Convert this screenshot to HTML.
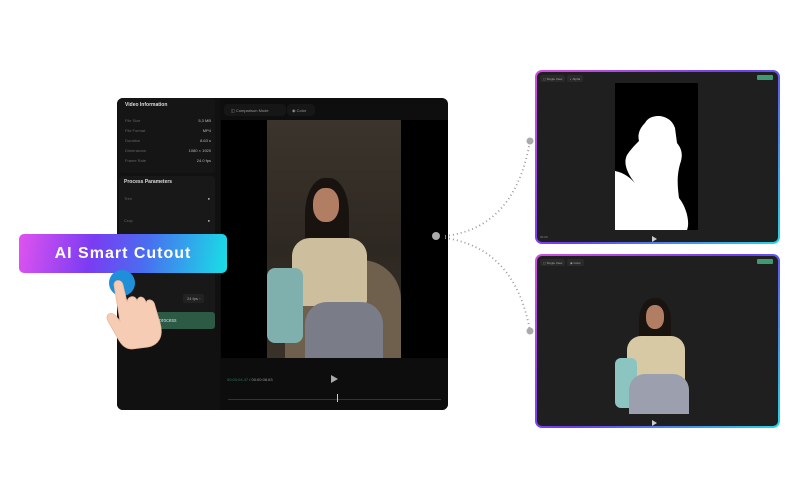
<!DOCTYPE html>
<html><head><meta charset="utf-8"><style>
*{margin:0;padding:0;box-sizing:border-box}
body{width:800px;height:500px;background:#fff;position:relative;overflow:hidden;font-family:"Liberation Sans",sans-serif}
.a{position:absolute}
.win{left:117px;top:98px;width:331px;height:312px;background:#0e0e0e;border-radius:6px;overflow:hidden}
.side{left:0;top:0;width:103px;height:312px;background:#111}
.card{background:#181818;border-radius:4px;left:2px;width:96px}
.t{font-size:5px;font-weight:bold;color:#ddd}
.r{font-size:4px;color:#666;display:flex;justify-content:space-between;width:86px}
.r b{color:#bbb;font-weight:normal}
.sm{font-size:4px;color:#aaa;white-space:nowrap}
.rw{left:535px;width:245px;height:174px;border-radius:7px;padding:2px;background:linear-gradient(135deg,#d54ee0,#6b3ff0 50%,#27d6e6)}
.rin{width:100%;height:100%;background:#1f1f1f;border-radius:5px;position:relative;overflow:hidden}
.tag{height:7px;background:#2a2a2a;border-radius:2px;font-size:3px;color:#aaa;padding:2px 3px;white-space:nowrap;top:3px}
</style></head><body>
<div class="a win">
 <div class="a side">
  <div class="a card" style="top:0;height:75px;background:#151515">
   <div class="a t" style="left:6px;top:4px">Video Information</div>
   <div class="a r" style="left:6px;top:20px"><span>File Size</span><b>5,3 MB</b></div>
   <div class="a r" style="left:6px;top:30px"><span>File Format</span><b>MP4</b></div>
   <div class="a r" style="left:6px;top:40px"><span>Duration</span><b>8.63 s</b></div>
   <div class="a r" style="left:6px;top:50px"><span>Dimensions</span><b>1080 × 1920</b></div>
   <div class="a r" style="left:6px;top:60px"><span>Frame Rate</span><b>24.0 fps</b></div>
  </div>
  <div class="a card" style="top:78px;height:150px">
   <div class="a t" style="left:5px;top:3px">Process Parameters</div>
   <div class="a r" style="left:5px;top:20px"><span>Trim</span><b>●</b></div>
   <div class="a r" style="left:5px;top:42px"><span>Crop</span><b>●</b></div>
   <div class="a sm" style="left:64px;top:118px;background:#222;padding:2px 4px;border-radius:2px">24 fps ◦</div>
  </div>
  <div class="a" style="left:2px;top:214px;width:96px;height:17px;background:#2c5a45;border-radius:3px;font-size:5px;color:#cde;padding:6px 0 0 40px">process</div>
 </div>
 <div class="a sm" style="left:107px;top:6px;width:62px;height:12px;background:#161616;border-radius:4px;color:#999;padding:4px 0 0 7px">◫ Comparison Mode</div>
 <div class="a sm" style="left:170px;top:6px;width:28px;height:12px;background:#161616;border-radius:4px;color:#999;padding:4px 0 0 5px">◉ Color</div>
 <div class="a" style="left:104px;top:22px;width:227px;height:238px;background:#000"></div>
 <div class="a" style="left:150px;top:22px;width:134px;height:238px;background:linear-gradient(#3b342c,#2e2822 55%,#3a3229);overflow:hidden">
  <div class="a" style="left:18px;top:140px;width:116px;height:110px;background:#6e604d;border-radius:40px 40px 0 0"></div>
  <div class="a" style="left:38px;top:58px;width:44px;height:80px;background:#191310;border-radius:45% 45% 20% 20%"></div>
  <div class="a" style="left:46px;top:68px;width:26px;height:34px;background:#b27e63;border-radius:45%"></div>
  <div class="a" style="left:25px;top:118px;width:75px;height:68px;background:#cdbf9e;border-radius:18px 18px 6px 6px"></div>
  <div class="a" style="left:0;top:148px;width:36px;height:75px;background:#7fb0ad;border-radius:8px"></div>
  <div class="a" style="left:38px;top:182px;width:78px;height:60px;background:#7a7c88;border-radius:22px 22px 0 0"></div>
 </div>
 <div class="a" style="left:104px;top:260px;width:227px;height:52px;background:#0d0d0d"></div>
 <div class="a sm" style="left:110px;top:279px;color:#999"><span style="color:#2f7a5c">00:00:04.47</span> / 00:00:08.63</div>
 <div class="a" style="left:214px;top:277px;width:0;height:0;border-left:7px solid #aaa;border-top:4.5px solid transparent;border-bottom:4.5px solid transparent"></div>
 <div class="a" style="left:111px;top:301px;width:213px;height:1px;background:#333"></div>
 <div class="a" style="left:220px;top:296px;width:1px;height:8px;background:#ccc"></div>
</div>
<svg class="a" style="left:0;top:0" width="800" height="500">
 <circle cx="436" cy="236" r="4" fill="#aaa"/>
 <path d="M445 236 Q515 228 530 141" fill="none" stroke="#999" stroke-width="1.8" stroke-dasharray="1 3"/>
 <path d="M445 238 Q515 248 530 331" fill="none" stroke="#999" stroke-width="1.8" stroke-dasharray="1 3"/>
 <circle cx="530" cy="141" r="3.5" fill="#aaa"/>
 <circle cx="530" cy="331" r="3.5" fill="#aaa"/>
</svg>
<div class="a" style="left:19px;top:234px;width:208px;height:39px;border-radius:5px;background:linear-gradient(100deg,#e053f0 0%,#7a3cf2 35%,#4a6cf0 60%,#18e0e6 100%);color:#fff;font-weight:bold;font-size:16px;letter-spacing:1px;text-align:center;line-height:39px">AI Smart Cutout</div>
<svg class="a" style="left:100px;top:265px" width="80" height="85" viewBox="0 0 80 85">
 <circle cx="22" cy="18" r="13" fill="#1e8fd8"/>
 <path d="M14 20 C14 14 22 14 23 20 L27 37 C28 30 36 30 37 36 C38 30 45 31 46 38 C47 33 54 34 55 41 L60 58 C64 72 58 80 48 82 L32 84 C24 84 20 78 16 70 L8 56 C5 50 10 46 15 50 L20 56 Z" fill="#f6cdb4" stroke="#e9b79c" stroke-width="0.8"/>
</svg>
<div class="a rw" style="top:70px"><div class="rin">
 <div class="a tag" style="left:3px">▢ Single View</div>
 <div class="a tag" style="left:30px">◐ Alpha</div>
 <div class="a" style="right:5px;top:3px;width:16px;height:5px;background:#3e9a72;border-radius:1px"></div>
 <div class="a" style="left:78px;top:11px;width:83px;height:147px;background:#000;overflow:hidden">
  <svg width="83" height="147" viewBox="0 0 83 147"><path d="M30 40 C35 30 55 30 60 45 L62 60 C66 65 68 70 66 78 C62 90 62 100 64 115 C72 125 75 140 72 147 L0 147 L0 88 C10 90 15 95 20 100 C12 90 8 80 12 72 C16 66 20 62 24 58 C22 50 26 44 30 40 Z" fill="#fff"/></svg>
 </div>
 <div class="a sm" style="left:3px;top:163px;font-size:3px;color:#888">00:00</div>
 <div class="a" style="left:115px;top:164px;width:0;height:0;border-left:5px solid #ccc;border-top:3px solid transparent;border-bottom:3px solid transparent"></div>
</div></div>
<div class="a rw" style="top:254px"><div class="rin">
 <div class="a tag" style="left:3px">▢ Single View</div>
 <div class="a tag" style="left:30px">◉ Color</div>
 <div class="a" style="right:5px;top:3px;width:16px;height:5px;background:#3e9a72;border-radius:1px"></div>
 <div class="a" style="left:102px;top:42px;width:32px;height:50px;background:#1a1411;border-radius:45% 45% 20% 20%"></div>
 <div class="a" style="left:109px;top:49px;width:18px;height:24px;background:#b27e63;border-radius:45%"></div>
 <div class="a" style="left:90px;top:80px;width:58px;height:52px;background:#d6c9a4;border-radius:14px 14px 4px 4px"></div>
 <div class="a" style="left:78px;top:102px;width:22px;height:50px;background:#8cc4c2;border-radius:6px"></div>
 <div class="a" style="left:92px;top:118px;width:60px;height:40px;background:#9ca0ae;border-radius:16px 16px 0 0"></div>
 <div class="a" style="left:115px;top:164px;width:0;height:0;border-left:5px solid #ccc;border-top:3px solid transparent;border-bottom:3px solid transparent"></div>
</div></div>
</body></html>
